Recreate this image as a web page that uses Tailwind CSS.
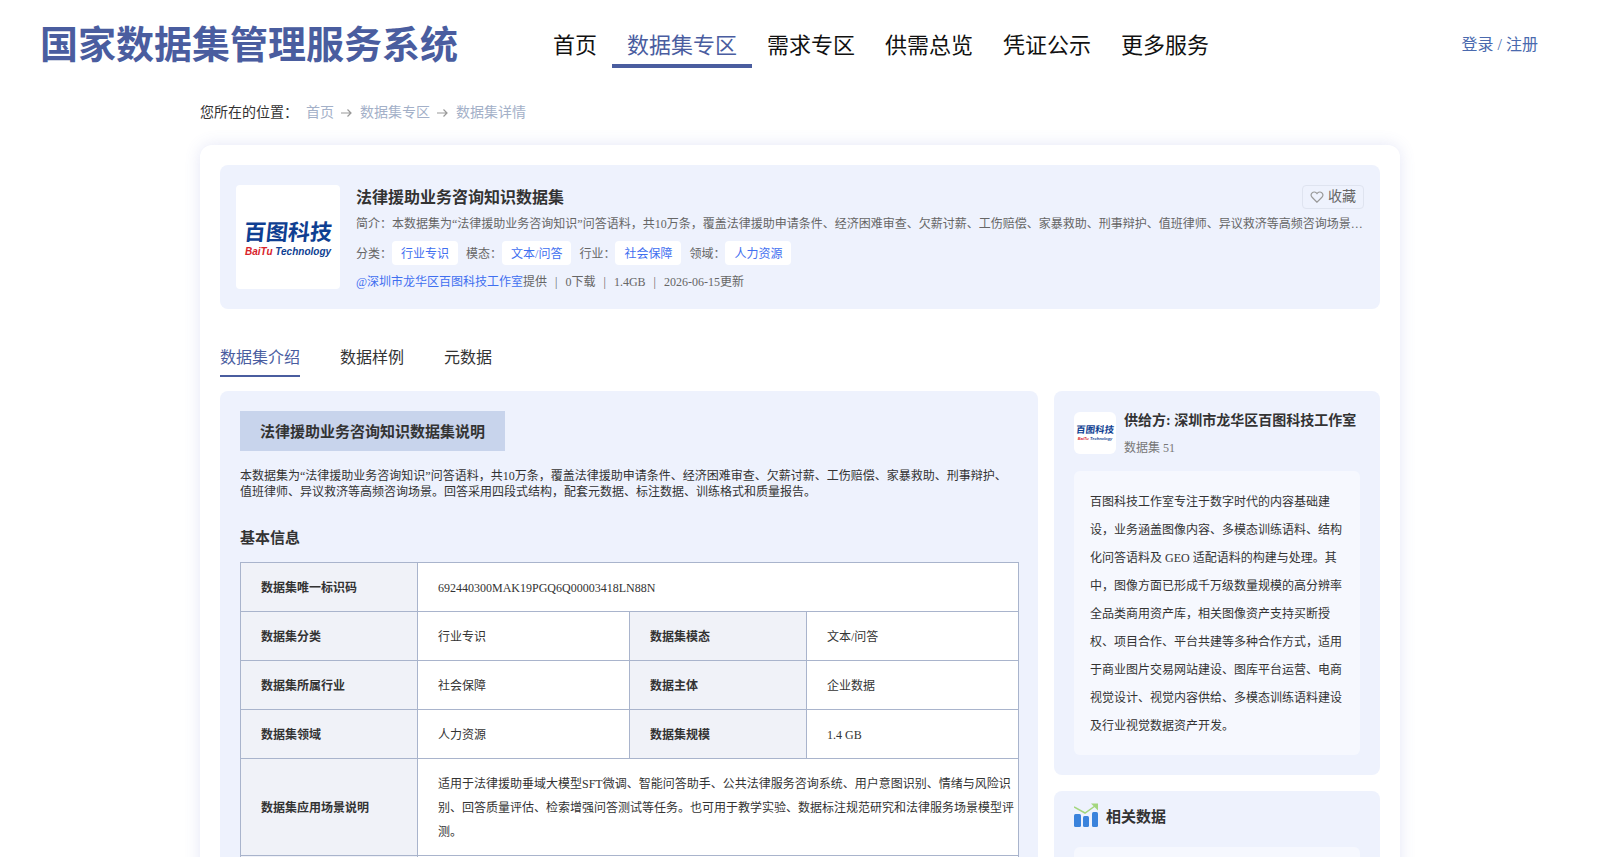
<!DOCTYPE html>
<html lang="zh-CN">
<head>
<meta charset="utf-8">
<title>数据集详情</title>
<script src="https://cdn.jsdelivr.net/npm/@tailwindcss/browser@4"></script>
</head>
<body class="bg-white [font-family:'Liberation_Serif','Noto_Sans_CJK_SC',serif] text-[#333]">
<div class="h-[857px] overflow-hidden">

  <!-- Header -->
  <header class="flex items-center pt-[22px] pl-10 h-[68px]">
    <h1 class="w-[418px] text-[38px] leading-[46px] font-bold text-[#4a5d9f] whitespace-nowrap">国家数据集管理服务系统</h1>
    <nav class="flex ml-20 text-[22px] text-[#111]">
      <a class="h-[46px] px-[15px] pt-1 flex items-center border-b-4 border-transparent">首页</a>
      <a class="h-[46px] px-[15px] pt-1 flex items-center border-b-4 border-[#4a5d9f] text-[#4a5d9f]">数据集专区</a>
      <a class="h-[46px] px-[15px] pt-1 flex items-center border-b-4 border-transparent">需求专区</a>
      <a class="h-[46px] px-[15px] pt-1 flex items-center border-b-4 border-transparent">供需总览</a>
      <a class="h-[46px] px-[15px] pt-1 flex items-center border-b-4 border-transparent">凭证公示</a>
      <a class="h-[46px] px-[15px] pt-1 flex items-center border-b-4 border-transparent">更多服务</a>
    </nav>
    <a class="ml-auto mr-[62px] text-base text-[#4a6aae]">登录 / 注册</a>
  </header>

  <main class="w-[1200px] ml-[200px]">
    <!-- Breadcrumb -->
    <div class="flex items-center h-5 mt-[35px] mb-[22px] text-sm text-[#a3b0c8]">
      <span class="text-[#333] mr-2">您所在的位置：</span>
      <a>首页</a>
      <svg class="w-3 h-3 ml-1.5 mr-2" viewBox="0 0 12 12" fill="none" stroke="#999" stroke-width="1.2"><path d="M1 6h10M7.5 2.5 11 6l-3.5 3.5"/></svg>
      <a>数据集专区</a>
      <svg class="w-3 h-3 ml-1.5 mr-2" viewBox="0 0 12 12" fill="none" stroke="#999" stroke-width="1.2"><path d="M1 6h10M7.5 2.5 11 6l-3.5 3.5"/></svg>
      <a>数据集详情</a>
    </div>

    <div class="bg-white rounded-xl p-5 h-[900px] shadow-[0_0_16px_rgba(90,100,200,0.16)]">
      <!-- Dataset summary -->
      <section class="flex gap-4 bg-[#eef2fd] rounded-lg px-4 py-5">
        <div class="w-[104px] h-[104px] pt-1 shrink-0 bg-white rounded flex flex-col items-center justify-center">
          <div class="text-[#0f3f92] text-[22px] leading-[26px] font-bold -skew-x-6 whitespace-nowrap">百图科技</div>
          <div class="text-[10px] leading-3 font-bold italic whitespace-nowrap [font-family:'Liberation_Sans',sans-serif]"><span class="text-[#d8232a]">BaiTu</span> <span class="text-[#0f3f92]">Technology</span></div>
        </div>
        <div class="flex-1 min-w-0">
          <div class="flex items-center justify-between h-6">
            <h2 class="pt-0.5 text-base font-bold">法律援助业务咨询知识数据集</h2>
            <button class="flex items-center gap-1 w-[62px] h-6 justify-center border border-[#dfe4f0] rounded text-sm text-[#666]">
              <svg class="w-3.5 h-3.5" viewBox="0 0 24 24" fill="none" stroke="#999" stroke-width="2"><path d="M12 21 3.600 12.400a5.300 5.300 0 0 1 0-7.400 5.100 5.100 0 0 1 7.300 0l1.100 1.100L13.100 5a5.100 5.100 0 0 1 7.300 0 5.300 5.300 0 0 1 0 7.400z"/></svg>
              收藏
            </button>
          </div>
          <p class="mt-[7px] -mb-px text-xs leading-4 text-[#666] truncate">简介：本数据集为“法律援助业务咨询知识”问答语料，共10万条，覆盖法律援助申请条件、经济困难审查、欠薪讨薪、工伤赔偿、家暴救助、刑事辩护、值班律师、异议救济等高频咨询场景。回答采用四段式结构，配套元数据、标注数据、训练格式和质量报告。</p>
          <div class="flex items-center mt-2.5 text-xs text-[#666]">
            <span class="pt-px">分类：</span><span class="bg-white rounded px-[9px] h-6 pt-px leading-6 text-[#3f6ff0] mr-2">行业专识</span>
            <span class="pt-px">模态：</span><span class="bg-white rounded px-[9px] h-6 pt-px leading-6 text-[#3f6ff0] mr-2">文本/问答</span>
            <span class="pt-px">行业：</span><span class="bg-white rounded px-[9px] h-6 pt-px leading-6 text-[#3f6ff0] mr-2">社会保障</span>
            <span class="pt-px">领域：</span><span class="bg-white rounded px-[9px] h-6 pt-px leading-6 text-[#3f6ff0]">人力资源</span>
          </div>
          <div class="mt-[9px] -mb-px text-xs leading-4 text-[#666]"><a class="text-[#3f6ff0]">@深圳市龙华区百图科技工作室</a>提供<span class="mx-2">|</span>0下载<span class="mx-2">|</span>1.4GB<span class="mx-2">|</span>2026-06-15更新</div>
        </div>
      </section>

      <!-- Tabs -->
      <div class="flex gap-10 mt-9 text-base leading-6">
        <a class="pt-px pb-[5px] border-b-2 border-[#4a5d9f] text-[#4a5d9f]">数据集介绍</a>
        <a class="pt-px pb-[5px] border-b-2 border-transparent">数据样例</a>
        <a class="pt-px pb-[5px] border-b-2 border-transparent">元数据</a>
      </div>

      <div class="flex gap-4 mt-3.5 items-start">
        <!-- Left column -->
        <section class="w-[818px] shrink-0 bg-[#eef2fd] rounded-lg p-5">
          <h3 class="inline-block h-10 pt-px bg-[#c8d4ec] px-5 text-[15px] leading-10 font-bold align-top">法律援助业务咨询知识数据集说明</h3>
          <p class="mt-[17px] text-xs leading-4">本数据集为“法律援助业务咨询知识”问答语料，共10万条，覆盖法律援助申请条件、经济困难审查、欠薪讨薪、工伤赔偿、家暴救助、刑事辩护、值班律师、异议救济等高频咨询场景。回答采用四段式结构，配套元数据、标注数据、训练格式和质量报告。</p>
          <h4 class="mt-[26px] text-[15px] leading-6 font-bold">基本信息</h4>
          <table class="mt-3 w-[778px] table-fixed border-collapse bg-white text-xs leading-6">
            <colgroup><col class="w-[177px]"><col class="w-[212px]"><col class="w-[177px]"><col class="w-[212px]"></colgroup>
            <tbody>
              <tr class="h-[49px]">
                <th class="border border-[#a9b4cc] bg-[#f0f2f8] pl-5 pt-0.5 text-left font-bold">数据集唯一标识码</th>
                <td colspan="3" class="border border-[#a9b4cc] pl-5 pt-0.5">692440300MAK19PGQ6Q00003418LN88N</td>
              </tr>
              <tr class="h-[49px]">
                <th class="border border-[#a9b4cc] bg-[#f0f2f8] pl-5 pt-0.5 text-left font-bold">数据集分类</th>
                <td class="border border-[#a9b4cc] pl-5 pt-0.5">行业专识</td>
                <th class="border border-[#a9b4cc] bg-[#f0f2f8] pl-5 pt-0.5 text-left font-bold">数据集模态</th>
                <td class="border border-[#a9b4cc] pl-5 pt-0.5">文本/问答</td>
              </tr>
              <tr class="h-[49px]">
                <th class="border border-[#a9b4cc] bg-[#f0f2f8] pl-5 pt-0.5 text-left font-bold">数据集所属行业</th>
                <td class="border border-[#a9b4cc] pl-5 pt-0.5">社会保障</td>
                <th class="border border-[#a9b4cc] bg-[#f0f2f8] pl-5 pt-0.5 text-left font-bold">数据主体</th>
                <td class="border border-[#a9b4cc] pl-5 pt-0.5">企业数据</td>
              </tr>
              <tr class="h-[49px]">
                <th class="border border-[#a9b4cc] bg-[#f0f2f8] pl-5 pt-0.5 text-left font-bold">数据集领域</th>
                <td class="border border-[#a9b4cc] pl-5 pt-0.5">人力资源</td>
                <th class="border border-[#a9b4cc] bg-[#f0f2f8] pl-5 pt-0.5 text-left font-bold">数据集规模</th>
                <td class="border border-[#a9b4cc] pl-5 pt-0.5">1.4 GB</td>
              </tr>
              <tr>
                <th class="border border-[#a9b4cc] bg-[#f0f2f8] pl-5 pt-0.5 text-left font-bold">数据集应用场景说明</th>
                <td colspan="3" class="border border-[#a9b4cc] pl-5 pr-0.5 pt-[13px] pb-[11px]">适用于法律援助垂域大模型SFT微调、智能问答助手、公共法律服务咨询系统、用户意图识别、情绪与风险识别、回答质量评估、检索增强问答测试等任务。也可用于教学实验、数据标注规范研究和法律服务场景模型评测。</td>
              </tr>
              <tr class="h-[49px]">
                <th class="border border-[#a9b4cc] bg-[#f0f2f8]"></th>
                <td colspan="3" class="border border-[#a9b4cc]"></td>
              </tr>
            </tbody>
          </table>
        </section>

        <!-- Right column -->
        <aside class="flex-1 min-w-0 flex flex-col gap-4">
          <section class="bg-[#eef2fd] rounded-lg p-5">
            <div class="flex gap-2">
              <div class="w-[42px] h-[42px] mt-px shrink-0 bg-white rounded-md flex flex-col items-center justify-center">
                <div class="text-[#0f3f92] text-[9.5px] leading-[11px] font-bold -skew-x-6 whitespace-nowrap">百图科技</div>
                <div class="text-[4px] leading-[5px] font-bold italic whitespace-nowrap [font-family:'Liberation_Sans',sans-serif]"><span class="text-[#d8232a]">BaiTu</span> <span class="text-[#0f3f92]">Technology</span></div>
              </div>
              <div>
                <div class="mt-px text-sm leading-[18px] font-bold">供给方: 深圳市龙华区百图科技工作室</div>
                <div class="mt-2.5 text-xs leading-4 text-[#777]">数据集 51</div>
              </div>
            </div>
            <p class="mt-[15px] bg-[#f6f8fe] rounded-md px-4 pt-[17px] pb-[15px] text-xs leading-7">百图科技工作室专注于数字时代的内容基础建设，业务涵盖图像内容、多模态训练语料、结构化问答语料及 GEO 适配语料的构建与处理。其中，图像方面已形成千万级数量规模的高分辨率全品类商用资产库，相关图像资产支持买断授权、项目合作、平台共建等多种合作方式，适用于商业图片交易网站建设、图库平台运营、电商视觉设计、视觉内容供给、多模态训练语料建设及行业视觉数据资产开发。</p>
          </section>
          <section class="bg-[#eef2fd] rounded-lg p-5 h-[200px]">
            <div class="flex items-center gap-2 h-6 -mt-2">
              <svg class="w-6 h-6" viewBox="0 0 24 24">
                <path d="M0 4 11 10 21 3" fill="none" stroke="#a3d67e" stroke-width="1.500"/>
                <path d="M17 0.500h7v7z" fill="#a3d67e"/>
                <rect x="0" y="11" width="7" height="13" rx="1.500" fill="#3a83dc"/>
                <rect x="9" y="13" width="6" height="11" rx="1.500" fill="#3a83dc"/>
                <rect x="18" y="9" width="6" height="15" rx="1.500" fill="#3a83dc"/>
              </svg>
              <h3 class="pt-[5px] text-[15px] font-bold">相关数据</h3>
            </div>
            <div class="mt-5 h-[120px] bg-[#f6f8fe] rounded-md"></div>
          </section>
        </aside>
      </div>
    </div>
  </main>
</div>
</body>
</html>
